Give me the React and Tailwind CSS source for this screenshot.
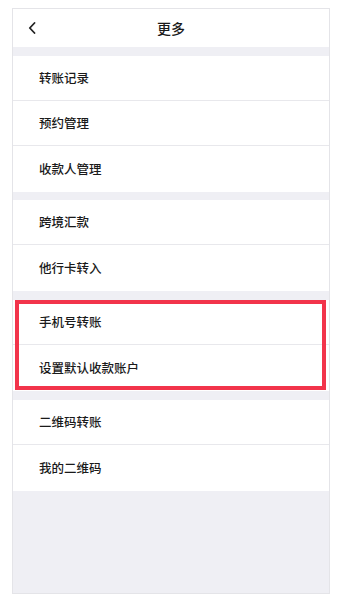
import React from "react";

const font = { fontFamily: '"Noto Sans CJK SC", "Noto Sans", sans-serif' };

function Row({ label, last }) {
  return (
    <div
      className={
        "flex items-center pl-[26px] bg-white text-[12.5px] font-medium text-[#1a1a1a] " +
        (last ? "h-[46px]" : "h-[45px] border-b border-[#e8e8ec]")
      }
    >
      {label}
    </div>
  );
}

function Group({ items, highlight, gap }) {
  return (
    <div className={gap + " relative flex flex-col"}>
      {items.map((t, i) => (
        <Row key={t} label={t} last={i === items.length - 1} />
      ))}
      {highlight && (
        <div className="absolute left-[2px] right-[3px] top-0 bottom-[1px] border-[4px] border-[#f2344b] pointer-events-none" />
      )}
    </div>
  );
}

export default function App() {
  return (
    <div className="w-[340px] h-[600px] bg-white pt-[8px] pl-[12px]" style={font}>
      <div className="w-[318px] h-[586px] border border-[#e4e4e8] bg-[#efeff4] flex flex-col">
        <div className="h-[38px] bg-white relative flex items-center justify-center">
          <svg
            className="absolute left-[15px] top-[13px]"
            width="8"
            height="12"
            viewBox="0 0 8 12"
            fill="none"
          >
            <path d="M6.5 1 L1.8 6 L6.5 11" stroke="#222" strokeWidth="1.8" strokeLinecap="round" strokeLinejoin="round" />
          </svg>
          <span className="text-[14px] font-medium text-[#1a1a1a]">更多</span>
        </div>
        <Group gap="mt-[9px]" items={["转账记录", "预约管理", "收款人管理"]} />
        <Group gap="mt-[8px]" items={["跨境汇款", "他行卡转入"]} />
        <Group gap="mt-[9px]" items={["手机号转账", "设置默认收款账户"]} highlight />
        <Group gap="mt-[9px]" items={["二维码转账", "我的二维码"]} />
      </div>
    </div>
  );
}
